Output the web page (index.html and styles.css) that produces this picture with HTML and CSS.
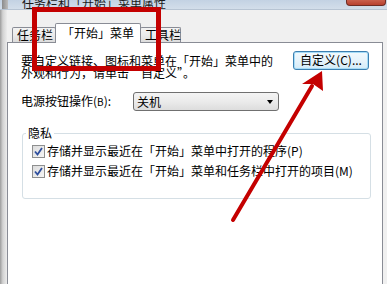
FILE: index.html
```html
<!DOCTYPE html>
<html lang="zh-CN">
<head>
<meta charset="utf-8">
<link rel="stylesheet" href="styles.css">
</head>
<body>
<div class="window">
  <div class="titlebar">
    <span class="appicon"></span>
    <span class="title">任务栏和「开始」菜单属性</span>
    <span class="close"></span>
  </div>
  <div class="frame">
    <div class="edge"></div>
    <div class="main">
      <div class="tabs">
        <div class="tab">任务栏</div>
        <div class="tab active">「开始」菜单</div>
        <div class="tab">工具栏</div>
      </div>
      <div class="panel">
        <div class="row-intro">
          <p class="intro">要自定义链接、图标和菜单在「开始」菜单中的外观和行为，请单击“自定义”。</p>
          <div class="button">自定义(C)...</div>
        </div>
        <div class="row-power">
          <span class="label">电源按钮操作(<span class="small">B</span>):</span>
          <div class="select"><span>关机</span><span class="caret"></span></div>
        </div>
        <fieldset class="group">
          <legend>隐私</legend>
          <div class="check-row">
            <span class="checkbox"><svg width="9" height="9" viewBox="0 0 9 9"><path d="M1 4.5 L3.5 7.5 L8 1" fill="none" stroke="#2f4f9e" stroke-width="1.8"/></svg></span>
            <span>存储并显示最近在「开始」菜单中打开的程序(P)</span>
          </div>
          <div class="check-row">
            <span class="checkbox"><svg width="9" height="9" viewBox="0 0 9 9"><path d="M1 4.5 L3.5 7.5 L8 1" fill="none" stroke="#2f4f9e" stroke-width="1.8"/></svg></span>
            <span>存储并显示最近在「开始」菜单和任务栏中打开的项目(M)</span>
          </div>
        </fieldset>
      </div>
    </div>
  </div>
</div>
<div class="highlight"></div>
<svg class="arrow" width="387" height="284" viewBox="0 0 387 284">
  <line x1="233" y1="220" x2="312" y2="86" stroke="#c40000" stroke-width="4" stroke-linecap="round"/>
  <polygon points="322,71 323,91 313,84 302,84" fill="#c40000"/>
</svg>
</body>
</html>
```

FILE: styles.css
```css
html, body {
  margin: 0;
  padding: 0;
}
body {
  width: 387px;
  height: 284px;
  overflow: hidden;
  position: relative;
  background: #f0f0f0;
  font-family: "Noto Sans CJK SC", "Noto Sans", sans-serif;
  font-size: 12px;
  color: #000;
}
.window {
  display: flex;
  flex-direction: column;
  height: 284px;
}
.titlebar {
  height: 9px;
  flex: none;
  display: flex;
  align-items: flex-end;
  background: linear-gradient(#c3d2e3, #d3deea);
  border-bottom: 1px solid #b7c4d3;
  overflow: hidden;
}
.appicon {
  width: 6px;
  height: 9px;
  margin-left: 2px;
  background: linear-gradient(90deg, #8b8b8b, #bdbdbd);
}
.title {
  margin-left: 14px;
  line-height: 12px;
  margin-bottom: 0;
  color: #1a1a1a;
  white-space: nowrap;
}
.close {
  margin-left: auto;
  margin-right: 1px;
  align-self: flex-start;
  width: 38px;
  height: 5px;
  background: linear-gradient(#c9604d, #b8412f);
  border: 1px solid #6e2c24;
  border-top: none;
  border-radius: 0 0 4px 4px;
}
.frame {
  flex: 1;
  display: flex;
}
.edge {
  width: 7px;
  flex: none;
  background: linear-gradient(90deg, #9c9c9c, #d2d2d2 40%, #ececec);
}
.main {
  flex: none;
  width: 376px;
  display: flex;
  flex-direction: column;
}
.tabs {
  height: 32px;
  flex: none;
  display: flex;
  align-items: flex-end;
  padding-left: 5px;
}
.tab {
  height: 15px;
  box-sizing: border-box;
  padding: 0 4px;
  line-height: 13px;
  border: 1px solid #898c95;
  border-bottom: none;
  border-radius: 2px 2px 0 0;
  background: linear-gradient(#f3f3f3, #ebebeb 50%, #dcdcdc);
  white-space: nowrap;
}
.tab:first-child {
  width: 44px;
  text-align: center;
}
.tab:last-child {
  width: 41px;
  margin-left: -1px;
  text-align: center;
}
.tab.active {
  position: relative;
  z-index: 1;
  width: 86px;
  height: 20px;
  margin-left: -1px;
  margin-bottom: -1px;
  background: #fff;
  line-height: 18px;
  text-align: center;
}
.panel {
  flex: 1;
  background: #fff;
  border: 1px solid #898c95;
  border-bottom: none;
  padding: 8px 13px 0 13px;
}
.row-intro {
  display: flex;
  align-items: flex-start;
}
.intro {
  margin: 4px 0 0 0;
  width: 256px;
  line-height: 12px;
}
.button {
  margin-left: auto;
  width: 76px;
  height: 19px;
  box-sizing: border-box;
  border: 1px solid #3c7fb1;
  border-radius: 3px;
  background: linear-gradient(#f2f9fd, #e6f3fb 50%, #d4ebf8);
  box-shadow: inset 0 0 0 1px #a6dcf7;
  text-align: center;
  line-height: 16px;
  white-space: nowrap;
}
.row-power {
  display: flex;
  align-items: center;
  margin-top: 13px;
}
.label {
  width: 112px;
  line-height: 12px;
  white-space: nowrap;
}
.small {
  font-size: 10px;
}
.select {
  width: 146px;
  height: 19px;
  box-sizing: border-box;
  border: 1px solid #707070;
  border-radius: 3px;
  background: linear-gradient(#f4f4f4, #ebebeb 50%, #dddddd);
  display: flex;
  align-items: center;
  padding: 0 5px 0 3px;
  line-height: 12px;
}
.caret {
  margin-left: auto;
  width: 0;
  height: 0;
  border-left: 3.5px solid transparent;
  border-right: 3.5px solid transparent;
  border-top: 4px solid #000;
}
.group {
  margin: 16px 0 0 1px;
  width: 349px;
  box-sizing: border-box;
  border: 1px solid #d5dfe5;
  border-radius: 3px;
  padding: 2px 0 17px 3px;
}
.group legend {
  padding: 0 2px;
  line-height: 12px;
}
.check-row {
  display: flex;
  align-items: center;
  height: 20px;
  padding-left: 6px;
  line-height: 12px;
  white-space: nowrap;
}
.checkbox {
  width: 13px;
  height: 13px;
  box-sizing: border-box;
  border: 1px solid #8e8f8f;
  background: linear-gradient(135deg, #dcdcdc, #f6f6f6);
  display: flex;
  align-items: center;
  justify-content: center;
  margin-right: 2px;
}
.highlight {
  position: absolute;
  left: 32px;
  top: 7px;
  width: 129px;
  height: 64px;
  box-sizing: border-box;
  border: 5px solid #c40000;
}
.arrow {
  position: absolute;
  left: 0;
  top: 0;
}
```
